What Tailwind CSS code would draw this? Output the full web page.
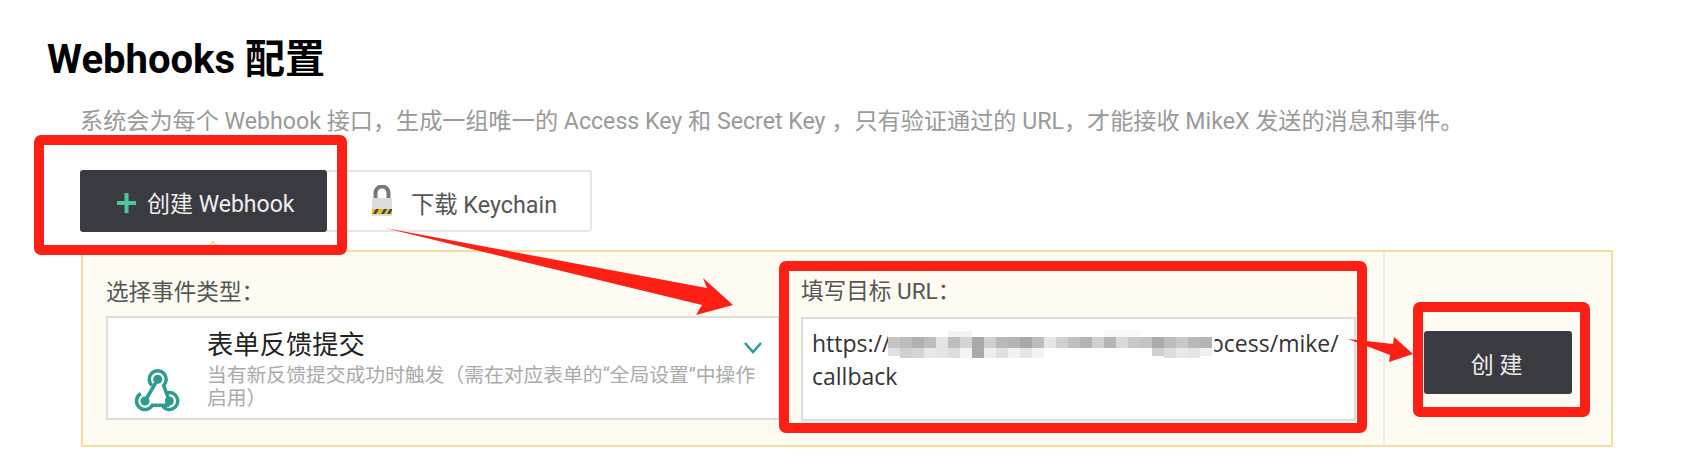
<!DOCTYPE html>
<html lang="zh">
<head>
  <meta charset="UTF-8" />
  <title>Webhooks 配置</title>
  <script src="https://cdn.jsdelivr.net/npm/@tailwindcss/browser@4"></script>
</head>
<body class="bg-white font-['Roboto','Noto_Sans_CJK_SC',sans-serif]">
<div class="relative w-[1685px] h-[473px] overflow-hidden">

  <h1 class="ml-[47px] pt-[38px] text-[40px] leading-[44px] font-bold text-black">Webhooks 配置</h1>
  <p class="ml-[80px] mt-[25px] text-[23.15px] leading-[30px] whitespace-nowrap text-[#999]">系统会为每个 Webhook 接口，生成一组唯一的 Access Key 和 Secret Key ，只有验证通过的 URL，才能接收 MikeX 发送的消息和事件。</p>

  <div class="ml-[80px] mt-[33px] flex">
    <button class="w-[247px] h-[62px] bg-[#3a3b40] rounded-[3px] flex items-center pl-[37px] pt-[8px] gap-[11px] text-[23px] text-[#eee]">
      <svg class="mt-[-4px]" width="19" height="20" viewBox="0 0 19 20"><path d="M9.5 0v20M0 10h19" stroke="#4fc6a0" stroke-width="4"/></svg>
      <span>创建 Webhook</span>
    </button>
    <button class="w-[265px] h-[62px] bg-white border-2 border-l-0 border-[#e6e6e6] rounded-r-[3px] flex items-center pl-[45px] gap-[19px] text-[23.3px] text-[#555]">
      <svg class="mt-[-1px]" width="20" height="31" viewBox="0 0 20 31">
        <path d="M3.5 14V8a6.5 6.5 0 0 1 13 0v6" fill="none" stroke="#777" stroke-width="4"/>
        <rect y="13" width="20" height="18" fill="#dcdcdc"/>
        <rect y="24" width="20" height="5" fill="#e8b820"/>
        <path d="M1 29l3-5h3l-3 5zM9 29l3-5h3l-3 5zM15 29l3-5h2v1l-2 4z" fill="#444"/>
      </svg>
      <span class="pt-[9px]">下载 Keychain</span>
    </button>
  </div>

  <div class="relative ml-[81px] mt-[18px] w-[1532px] h-[197px] border-2 border-[#f7dc9f] bg-[#fefbf3] flex">
    <div class="absolute left-[124px] top-[-9px] w-[12px] h-[12px] rotate-45 border-l-2 border-t-2 border-[#f7dc9f] bg-[#fefbf3]"></div>

    <div class="ml-[23px] pt-[26px] w-[674px]">
      <label class="block h-[30px] text-[22.6px] leading-[30px] text-[#555]">选择事件类型：</label>
      <div class="mt-[8px] h-[104px] border-2 border-[#ddd] bg-white flex">
        <div class="w-[99px] relative">
          <svg class="absolute left-[12px] top-[32px]" width="80" height="70" viewBox="0 0 80 70">
            <g fill="none" stroke="#2e9c8c" stroke-width="3.5">
              <path d="M31.8 35.4A8.5 8.5 0 1 1 43.6 35.4L49.3 51"/>
              <path d="M20.75 43.64A8.5 8.5 0 1 0 32.36 55.25H49.3"/>
              <path d="M47.3 42.74A8.5 8.5 0 1 1 41.94 55.25"/>
              <path d="M37.7 29.3L25 51"/>
            </g>
            <circle cx="37.7" cy="29.3" r="4.5" fill="#2e9c8c"/>
            <circle cx="25" cy="51" r="4.5" fill="#2e9c8c"/>
            <circle cx="49.3" cy="51" r="4.5" fill="#2e9c8c"/>
          </svg>
        </div>
        <div class="flex-1 pt-[11px] pr-[18px]">
          <div class="text-[26.3px] leading-[32px] text-[#222]">表单反馈提交</div>
          <div class="mt-[3px] text-[19.8px] leading-[23px] text-[#aaa]">当有新反馈提交成功时触发（需在对应表单的“全局设置”中操作启用）</div>
        </div>
        <svg class="absolute left-[660px] top-[89px]" width="20" height="14" viewBox="0 0 20 14"><path d="M2 2l8 9 8-9" fill="none" stroke="#2d9c8e" stroke-width="2.5"/></svg>
      </div>
    </div>

    <div class="ml-[21px] pt-[25px] w-[555px]">
      <label class="block h-[30px] text-[22.6px] leading-[30px] text-[#555]">填写目标 URL：</label>
      <div class="relative mt-[10px] h-[104px] border-2 border-[#ddd] bg-white px-[9px] pt-[8px] font-['Open_Sans',sans-serif] text-[23px] leading-[33px] text-[#333] whitespace-nowrap">
        https://app.example.org/webhook/process/mike/<br>callback
        <svg class="absolute left-[85px] top-[7px]" width="340" height="36" viewBox="0 0 340 36">
          <path d="M0 8h215q5-8 12-8h30q20 0 30 6h38q3 10 1 20q-10 8-40 8H8q-8-2-8-10z" fill="#fff"/>
          <rect x="60" y="5" width="24" height="6" fill="#f2f2f2"/>
          <rect x="216" y="4" width="36" height="7" fill="#f8f8f8"/>
          <g>
            <rect x="0" y="11" width="12" height="11" fill="#c4c4c4"/><rect x="12" y="11" width="12" height="11" fill="#bcbcbc"/><rect x="24" y="11" width="12" height="11" fill="#b0b0b0"/>
            <rect x="36" y="11" width="12" height="11" fill="#bdbdbd"/><rect x="48" y="11" width="12" height="11" fill="#e4e4e4"/><rect x="60" y="11" width="12" height="11" fill="#bebebe"/>
            <rect x="72" y="11" width="12" height="11" fill="#d4d4d4"/><rect x="84" y="11" width="12" height="11" fill="#a8a8a8"/><rect x="96" y="11" width="12" height="11" fill="#cfcfcf"/>
            <rect x="108" y="11" width="12" height="11" fill="#b8b8b8"/><rect x="120" y="11" width="12" height="11" fill="#b4b4b4"/><rect x="132" y="11" width="12" height="11" fill="#a8a8a8"/>
            <rect x="144" y="11" width="12" height="11" fill="#bcbcbc"/><rect x="156" y="11" width="12" height="11" fill="#e6e6e6"/><rect x="168" y="11" width="12" height="11" fill="#cfcfcf"/>
            <rect x="180" y="11" width="12" height="11" fill="#c0c0c0"/><rect x="192" y="11" width="12" height="11" fill="#b4b4b4"/><rect x="204" y="11" width="12" height="11" fill="#d0d0d0"/>
            <rect x="216" y="11" width="12" height="11" fill="#b4b4b4"/><rect x="228" y="11" width="12" height="11" fill="#d8d8d8"/><rect x="240" y="11" width="12" height="11" fill="#c8c8c8"/>
            <rect x="252" y="11" width="12" height="11" fill="#c4c4c4"/><rect x="264" y="11" width="12" height="11" fill="#aaaaaa"/><rect x="276" y="11" width="12" height="11" fill="#bcbcbc"/>
            <rect x="288" y="11" width="12" height="11" fill="#c8c8c8"/><rect x="300" y="11" width="12" height="11" fill="#b8b8b8"/><rect x="312" y="11" width="12" height="11" fill="#b4b4b4"/>
            <rect x="0" y="22" width="12" height="8" fill="#e0e0e0"/><rect x="12" y="22" width="12" height="10" fill="#cfcfcf"/><rect x="24" y="22" width="12" height="10" fill="#d4d4d4"/>
            <rect x="36" y="22" width="12" height="10" fill="#e8e8e8"/><rect x="48" y="22" width="12" height="10" fill="#e4e4e4"/><rect x="60" y="22" width="12" height="10" fill="#dddddd"/>
            <rect x="72" y="22" width="12" height="10" fill="#f4f4f4"/><rect x="84" y="22" width="12" height="10" fill="#aaaaaa"/><rect x="96" y="22" width="12" height="10" fill="#eeeeee"/>
            <rect x="108" y="22" width="12" height="10" fill="#e0e0e0"/><rect x="120" y="22" width="12" height="10" fill="#f0f0f0"/><rect x="132" y="22" width="12" height="10" fill="#e4e4e4"/>
            <rect x="144" y="22" width="12" height="10" fill="#f2f2f2"/><rect x="264" y="22" width="12" height="8" fill="#d0d0d0"/><rect x="276" y="22" width="12" height="10" fill="#dcdcdc"/>
            <rect x="288" y="22" width="12" height="10" fill="#e8e8e8"/><rect x="300" y="22" width="12" height="10" fill="#e4e4e4"/><rect x="312" y="22" width="12" height="8" fill="#f0f0f0"/>
          </g>
        </svg>
      </div>
    </div>

    <div class="ml-[27px] w-[2px] bg-[#eeeeee]"></div>

    <div class="flex-1 flex justify-center pt-[79px]">
      <button class="w-[148px] h-[63px] pt-[7px] pl-[3px] bg-[#3a3b40] rounded-[3px] text-[23px] tracking-[0.25em] text-[#eee]">创建</button>
    </div>
  </div>

  <!-- 红色标注 -->
  <div class="absolute left-[34px] top-[135px] w-[313px] h-[120px] border-[10px] border-[#fe2015] rounded-[7px]"></div>
  <div class="absolute left-[779px] top-[261px] w-[588px] h-[172px] border-[10px] border-[#fe2015] rounded-[7px]"></div>
  <div class="absolute left-[1413px] top-[302px] w-[177px] h-[115px] border-[10px] border-[#fe2015] rounded-[7px]"></div>
  <svg class="absolute left-0 top-0" width="1685" height="473" viewBox="0 0 1685 473">
    <path d="M385 228L707 288L703 278L733 305L696 315L702 305Z" fill="#fe2015"/>
    <path d="M1348 339L1393 344L1394 337L1413 354L1389 362L1390 355Z" fill="#fe2015"/>
  </svg>
</div>
</body>
</html>
